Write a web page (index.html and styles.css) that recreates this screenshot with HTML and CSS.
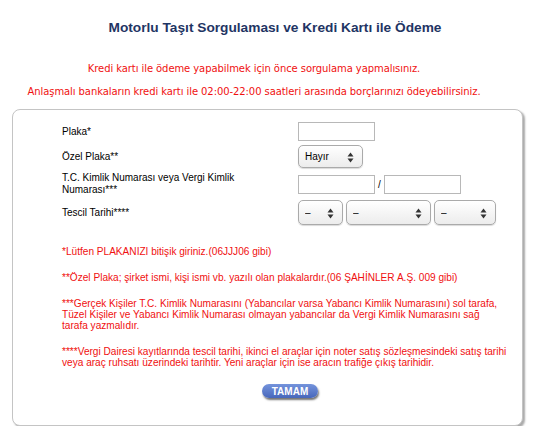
FILE: index.html
```html
<!DOCTYPE html>
<html lang="tr">
<head>
    <meta charset="UTF-8">
    <meta name="viewport" content="width=device-width, initial-scale=1.0">
    <title>Motorlu Taşıt Sorgulaması</title>
    <link rel="stylesheet" href="styles.css">
</head>
<body>
    <h1 class="page-title">Motorlu Taşıt Sorgulaması ve Kredi Kartı ile Ödeme</h1>

    <div class="notice">
        <p>Kredi kartı ile ödeme yapabilmek için önce sorgulama yapmalısınız.</p>
        <p>Anlaşmalı bankaların kredi kartı ile 02:00-22:00 saatleri arasında borçlarınızı ödeyebilirsiniz.</p>
    </div>

    <form class="query-box">
        <div class="form-grid">
            <label class="field-label" for="plaka">Plaka*</label>
            <div class="field"><input type="text" id="plaka" class="text-input"></div>

            <label class="field-label" for="ozel">Özel Plaka**</label>
            <div class="field">
                <span class="select-wrap">
                    <select id="ozel" class="select select-hayir"><option>Hayır</option><option>Evet</option></select>
                    <svg class="arrows" width="7" height="11" viewBox="0 0 7 11"><path d="M3.5 0.5 L6.5 4.5 L0.5 4.5 Z M3.5 10.5 L6.5 6.5 L0.5 6.5 Z" fill="#333"/></svg>
                </span>
            </div>

            <label class="field-label" for="tckn">T.C. Kimlik Numarası veya Vergi Kimlik Numarası***</label>
            <div class="field">
                <input type="text" id="tckn" class="text-input">
                <span class="slash">/</span>
                <input type="text" class="text-input">
            </div>

            <label class="field-label" for="gun">Tescil Tarihi****</label>
            <div class="field date-row">
                <span class="select-wrap">
                    <select id="gun" class="select select-day"><option>–</option></select>
                    <svg class="arrows" width="7" height="11" viewBox="0 0 7 11"><path d="M3.5 0.5 L6.5 4.5 L0.5 4.5 Z M3.5 10.5 L6.5 6.5 L0.5 6.5 Z" fill="#333"/></svg>
                </span>
                <span class="select-wrap">
                    <select class="select select-month"><option>–</option></select>
                    <svg class="arrows" width="7" height="11" viewBox="0 0 7 11"><path d="M3.5 0.5 L6.5 4.5 L0.5 4.5 Z M3.5 10.5 L6.5 6.5 L0.5 6.5 Z" fill="#333"/></svg>
                </span>
                <span class="select-wrap">
                    <select class="select select-year"><option>–</option></select>
                    <svg class="arrows" width="7" height="11" viewBox="0 0 7 11"><path d="M3.5 0.5 L6.5 4.5 L0.5 4.5 Z M3.5 10.5 L6.5 6.5 L0.5 6.5 Z" fill="#333"/></svg>
                </span>
            </div>
        </div>

        <div class="notes">
            <p>*Lütfen PLAKANIZI bitişik giriniz.(06JJJ06 gibi)</p>
            <p>**Özel Plaka; şirket ismi, kişi ismi vb. yazılı olan plakalardır.(06 ŞAHİNLER A.Ş. 009 gibi)</p>
            <p>***Gerçek Kişiler T.C. Kimlik Numarasını (Yabancılar varsa Yabancı Kimlik Numarasını) sol tarafa,<br>Tüzel Kişiler ve Yabancı Kimlik Numarası olmayan yabancılar da Vergi Kimlik Numarasını sağ<br>tarafa yazmalıdır.</p>
            <p>****Vergi Dairesi kayıtlarında tescil tarihi, ikinci el araçlar için noter satış sözleşmesindeki satış tarihi<br>veya araç ruhsatı üzerindeki tarihtir. Yeni araçlar için ise aracın trafiğe çıkış tarihidir.</p>
        </div>

        <div class="actions">
            <button type="button" class="btn-ok">TAMAM</button>
        </div>
    </form>
</body>
</html>
```

FILE: styles.css
```css
body {
    margin: 0;
    padding: 0;
    width: 550px;
    font-family: "Liberation Sans", Arial, sans-serif;
    font-size: 10px;
    color: #000;
    background: #fff;
}

.page-title {
    margin: 0;
    padding-top: 20px;
    height: 22px;
    text-align: center;
    font-size: 13.7px;
    font-weight: bold;
    color: #1f3564;
}

.notice {
    width: 508px;
    margin-top: 21px;
    text-align: center;
    font-family: "DejaVu Sans", Verdana, sans-serif;
    font-size: 10px;
    letter-spacing: -0.08px;
    color: #f01010;
}

.notice p {
    margin: 0 0 11px;
    line-height: 12px;
}

.query-box {
    margin: 6px 0 0 12px;
    width: 509px;
    height: 315px;
    border: 1px solid #c4c4c4;
    border-radius: 8px;
    box-shadow: 2px 2px 2px #aaa;
    background: #fff;
    box-sizing: content-box;
}

.form-grid {
    display: grid;
    grid-template-columns: 185px auto;
    column-gap: 51px;
    row-gap: 4px;
    align-items: center;
    padding: 12px 0 0 49px;
}

.field-label {
    line-height: 12px;
}

.field {
    display: flex;
    align-items: center;
}

.text-input {
    width: 77px;
    height: 19px;
    box-sizing: border-box;
    border: 1px solid #b8b8b8;
    margin: 0;
    padding: 0 2px;
    font: inherit;
}

.slash {
    width: 9px;
    text-align: center;
    font-size: 10px;
}

.select-wrap {
    position: relative;
    display: inline-block;
}

.select {
    appearance: none;
    -webkit-appearance: none;
    height: 23px;
    margin: 0;
    padding: 0 0 0 6px;
    border: 1px solid #aaa;
    border-radius: 5px;
    background: linear-gradient(#fff, #ececec);
    box-shadow: 0 1px 1px rgba(0, 0, 0, 0.15);
    font-family: "Liberation Sans", Arial, sans-serif;
    font-size: 10px;
    color: #000;
}

.select-hayir {
    width: 65px;
}

.date-row {
    gap: 3px;
}

.date-row .select {
    height: 25px;
}

.select-day {
    width: 45px;
}

.select-month {
    width: 85px;
}

.select-year {
    width: 62px;
}

.arrows {
    position: absolute;
    right: 9px;
    top: 50%;
    margin-top: -5px;
    pointer-events: none;
}

.notes {
    padding: 21px 2px 0 49px;
    font-size: 10.1px;
    white-space: nowrap;
    color: #f01010;
}

.notes p {
    margin: 0 0 15px;
    line-height: 11px;
}

.actions {
    padding-left: 249px;
    padding-top: 1px;
}

.btn-ok {
    width: 56px;
    height: 14px;
    padding: 0;
    border: none;
    border-radius: 7px;
    background: linear-gradient(#7594dc, #4767bb);
    box-shadow: 1px 2px 2px rgba(0, 0, 0, 0.55);
    color: #fff;
    font-family: "Liberation Sans", Arial, sans-serif;
    font-size: 10px;
    font-weight: bold;
    cursor: pointer;
}
```
